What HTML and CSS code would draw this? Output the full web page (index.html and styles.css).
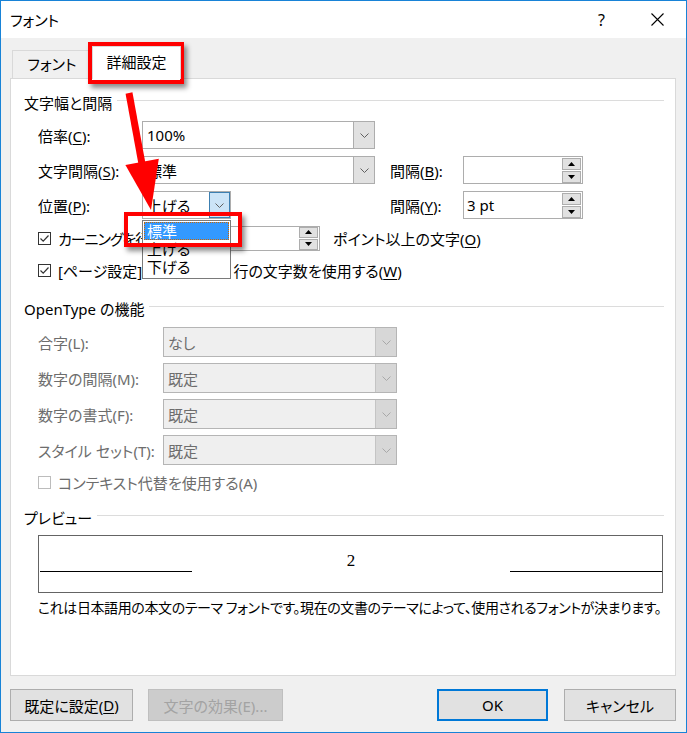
FILE: index.html
```html
<!DOCTYPE html>
<html lang="ja">
<head>
<meta charset="utf-8">
<title>フォント</title>
<link rel="stylesheet" href="styles.css">
</head>
<body>
<div class="window">
  <div class="titlebar">
    <span class="title">フォント</span>
    <span class="help">?</span>
    <svg class="close" width="13" height="13" viewBox="0 0 13 13"><path d="M0.5 0.5L12.5 12.5M12.5 0.5L0.5 12.5" stroke="#000" stroke-width="1.1" fill="none"/></svg>
  </div>
  <div class="client">
    <div class="tabs">
      <div class="tab">フォント</div>
      <div class="tab active">詳細設定</div>
    </div>
    <div class="panel">
      <div class="group-head"><span>文字幅と間隔</span></div>
      <div class="grid1">
        <span class="lbl">倍率(<u>C</u>):</span>
        <div class="combo w233"><span class="val">100%</span><span class="drop"><svg width="9" height="5" viewBox="0 0 9 5"><path d="M0.5 0.5L4.5 4.5L8.5 0.5" stroke="#606060" fill="none"/></svg></span></div>
        <span></span><span></span>

        <span class="lbl">文字間隔(<u>S</u>):</span>
        <div class="combo w233"><span class="val">標準</span><span class="drop"><svg width="9" height="5" viewBox="0 0 9 5"><path d="M0.5 0.5L4.5 4.5L8.5 0.5" stroke="#606060" fill="none"/></svg></span></div>
        <span class="lbl">間隔(<u>B</u>):</span>
        <div class="spin"><span class="val"></span><span class="spin-btns"><span class="sb"><svg width="7" height="4" viewBox="0 0 7 4"><path d="M0 4L3.5 0L7 4Z" fill="#000"/></svg></span><span class="sb"><svg width="7" height="4" viewBox="0 0 7 4"><path d="M0 0L3.5 4L7 0Z" fill="#000"/></svg></span></span></div>

        <span class="lbl">位置(<u>P</u>):</span>
        <div class="combo w89 active"><span class="val">上げる</span><span class="drop"><svg width="9" height="5" viewBox="0 0 9 5"><path d="M0.5 0.5L4.5 4.5L8.5 0.5" stroke="#606060" fill="none"/></svg></span></div>
        <span class="lbl">間隔(<u>Y</u>):</span>
        <div class="spin"><span class="val">3 pt</span><span class="spin-btns"><span class="sb"><svg width="7" height="4" viewBox="0 0 7 4"><path d="M0 4L3.5 0L7 4Z" fill="#000"/></svg></span><span class="sb"><svg width="7" height="4" viewBox="0 0 7 4"><path d="M0 0L3.5 4L7 0Z" fill="#000"/></svg></span></span></div>
      </div>

      <div class="check-row row4">
        <span class="cb"><svg width="11" height="11" viewBox="0 0 11 11"><path d="M1.5 5.5L4.2 8.2L9.5 2.5" stroke="#333" stroke-width="1.2" fill="none"/></svg></span>
        <span class="kern-lbl">カーニングを行う(<u>K</u>):</span>
        <div class="spin small"><span class="val"></span><span class="spin-btns"><span class="sb"><svg width="7" height="4" viewBox="0 0 7 4"><path d="M0 4L3.5 0L7 4Z" fill="#000"/></svg></span><span class="sb"><svg width="7" height="4" viewBox="0 0 7 4"><path d="M0 0L3.5 4L7 0Z" fill="#000"/></svg></span></span></div>
        <span class="after-spin">ポイント以上の文字(<u>O</u>)</span>
      </div>
      <div class="check-row row5">
        <span class="cb"><svg width="11" height="11" viewBox="0 0 11 11"><path d="M1.5 5.5L4.2 8.2L9.5 2.5" stroke="#333" stroke-width="1.2" fill="none"/></svg></span>
        <span>[ページ設定] で指定した 1 行の文字数を使用する(<u>W</u>)</span>
      </div>

      <div class="group-head gh2"><span>OpenType の機能</span></div>
      <div class="grid2">
        <span class="lbl">合字(L):</span>
        <div class="combo disabled"><span class="val">なし</span><span class="drop"><svg width="9" height="5" viewBox="0 0 9 5"><path d="M0.5 0.5L4.5 4.5L8.5 0.5" stroke="#a8a8a8" fill="none"/></svg></span></div>
        <span class="lbl">数字の間隔(M):</span>
        <div class="combo disabled"><span class="val">既定</span><span class="drop"><svg width="9" height="5" viewBox="0 0 9 5"><path d="M0.5 0.5L4.5 4.5L8.5 0.5" stroke="#a8a8a8" fill="none"/></svg></span></div>
        <span class="lbl">数字の書式(F):</span>
        <div class="combo disabled"><span class="val">既定</span><span class="drop"><svg width="9" height="5" viewBox="0 0 9 5"><path d="M0.5 0.5L4.5 4.5L8.5 0.5" stroke="#a8a8a8" fill="none"/></svg></span></div>
        <span class="lbl">スタイル セット(T):</span>
        <div class="combo disabled"><span class="val">既定</span><span class="drop"><svg width="9" height="5" viewBox="0 0 9 5"><path d="M0.5 0.5L4.5 4.5L8.5 0.5" stroke="#a8a8a8" fill="none"/></svg></span></div>
      </div>
      <div class="check-row row-ctx disabled-text">
        <span class="cb off"></span>
        <span>コンテキスト代替を使用する(A)</span>
      </div>

      <div class="group-head gh3"><span>プレビュー</span></div>
      <div class="preview">
        <span class="pline"></span>
        <span class="pmid">2</span>
        <span class="pline"></span>
      </div>
      <div class="caption">これは日本語用の本文のテーマ フォントです。現在の文書のテーマによって、使用されるフォントが決まります。</div>
    </div>
    <div class="buttons">
      <div class="btn b1">既定に設定(<u>D</u>)</div>
      <div class="btn b2 disabled">文字の効果(E)...</div>
      <div class="btn ok">OK</div>
      <div class="btn cancel">キャンセル</div>
    </div>
  </div>
</div>

<div class="droplist">
  <div class="item sel">標準</div>
  <div class="item">上げる</div>
  <div class="item">下げる</div>
</div>
<div class="redbox tab-mark"></div>
<div class="redbox item-mark"></div>
<svg class="arrow" width="687" height="733" viewBox="0 0 687 733">
  <line x1="129" y1="93" x2="142" y2="164" stroke="#ff0000" stroke-width="7"/>
  <polygon points="151,210 158.8,158.7 125.4,165.1" fill="#ff0000"/>
</svg>
</body>
</html>
```

FILE: styles.css
```css
* { box-sizing: border-box; }
html, body { margin: 0; padding: 0; }
body {
  position: relative;
  width: 687px;
  height: 733px;
  overflow: hidden;
  font-family: "Noto Sans", "Noto Sans CJK JP", sans-serif;
  font-size: 15px;
  color: #000;
  font-feature-settings: "palt";
  background: #fff;
}
u { text-decoration: underline; text-underline-offset: 2px; }

.window {
  width: 687px;
  height: 733px;
  border: 1px solid #1883d7;
  background: #f0f0f0;
  display: flex;
  flex-direction: column;
}
.titlebar {
  height: 37px;
  flex-shrink: 0;
  background: #fff;
  display: flex;
  align-items: center;
}
.title { flex: 1; padding-left: 9px; }
.help { margin-right: 46px; font-size: 16px; font-family: "Noto Sans", sans-serif; }
.close { margin-right: 22px; }

.client { flex: 1; padding-left: 9px; }
.tabs {
  height: 40px;
  display: flex;
  align-items: flex-end;
  padding-left: 2px;
}
.tab {
  width: 80px;
  height: 28px;
  display: flex;
  align-items: center;
  justify-content: center;
  border: 1px solid #d9d9d9;
  border-bottom: none;
  background: #f0f0f0;
  padding-bottom: 2px;
}
.tab.active {
  width: 89px;
  height: 33px;
  margin-bottom: -1px;
  background: #fff;
  position: relative;
  z-index: 1;
  padding-bottom: 4px;
}
.panel {
  width: 666px;
  height: 598px;
  background: #fff;
  border: 1px solid #d9d9d9;
  padding-top: 13px;
}
.group-head {
  display: flex;
  align-items: center;
  height: 20px;
  margin: 0 11px 0 13px;
}
.group-head::after {
  content: "";
  flex: 1;
  border-top: 1px solid #dcdcdc;
  margin-left: 5px;
  margin-bottom: 4px;
}
.gh2 { margin-top: 14px; }
.gh3 { margin-top: 13px; }

.grid1 {
  display: grid;
  grid-template-columns: 104px 248px 73px 120px;
  grid-template-rows: 28px 28px 28px;
  row-gap: 7px;
  align-items: center;
  margin: 9px 0 0 27px;
}
.combo {
  height: 28px;
  border: 1px solid #adadad;
  background: #fff;
  display: flex;
  align-items: center;
}
.combo .val { flex: 1; padding-left: 4px; white-space: nowrap; overflow: hidden; }
.combo .drop {
  width: 21px;
  height: 100%;
  background: #e1e1e1;
  border-left: 1px solid #adadad;
  display: flex;
  align-items: center;
  justify-content: center;
}
.w233 { width: 233px; }
.w89 { width: 89px; }
.combo.active .drop {
  background: #cce4f7;
  border: 1px solid #3c7fb1;
}
.spin {
  width: 120px;
  height: 28px;
  border: 1px solid #adadad;
  background: #fff;
  display: flex;
  align-items: center;
}
.spin .val { flex: 1; padding-left: 3px; }
.spin-btns {
  width: 19px;
  margin-right: 1px;
  display: flex;
  flex-direction: column;
  gap: 1px;
}
.sb {
  height: 12px;
  background: #e1e1e1;
  border: 1px solid #adadad;
  display: flex;
  align-items: center;
  justify-content: center;
}

.check-row {
  display: flex;
  align-items: center;
  height: 28px;
  margin-left: 27px;
  white-space: nowrap;
}
.row4 { margin-top: 5px; }
.row5 { margin-top: 4px; }
.cb {
  width: 13px;
  height: 13px;
  border: 1px solid #333;
  background: #fff;
  margin-right: 7px;
  display: flex;
  align-items: center;
  justify-content: center;
  flex-shrink: 0;
}
.cb.off { border-color: #bcbcbc; }
.kern-lbl { width: 154px; overflow: hidden; letter-spacing: -1px; }
.spin.small { width: 108px; height: 25px; }
.spin.small .sb { height: 11px; }
.after-spin { margin-left: 13px; }

.grid2 {
  display: grid;
  grid-template-columns: 125px 234px;
  grid-auto-rows: 30px;
  row-gap: 6px;
  align-items: center;
  margin: 9px 0 0 27px;
  color: #6d6d6d;
}
.combo.disabled {
  width: 234px;
  height: 30px;
  background: #efefef;
  border-color: #b5b5b5;
  color: #6d6d6d;
}
.combo.disabled .drop {
  background: #d7d7d7;
  border-left: 1px solid #c4c4c4;
}
.row-ctx { margin-top: 5px; height: 24px; }
.disabled-text { color: #6d6d6d; }

.preview {
  width: 625px;
  height: 58px;
  margin: 8px 0 0 27px;
  border: 1px solid #646464;
  display: flex;
  padding-left: 1px;
}
.pline {
  width: 152px;
  height: 36px;
  border-bottom: 1px solid #000;
}
.pmid {
  flex: 1;
  text-align: center;
  font-family: "Liberation Serif", serif;
  font-size: 17px;
  line-height: 20px;
  padding-top: 15px;
}
.caption {
  margin: 5px 0 0 27px;
  height: 20px;
  line-height: 20px;
  font-size: 14px;
  letter-spacing: -0.4px;
  white-space: nowrap;
}

.buttons {
  display: flex;
  height: 32px;
  margin-top: 13px;
  padding-right: 10px;
}
.btn {
  height: 32px;
  background: #e1e1e1;
  border: 1px solid #adadad;
  display: flex;
  align-items: center;
  justify-content: center;
  white-space: nowrap;
}
.b1 { width: 123px; }
.b2 { width: 135px; margin-left: 15px; }
.btn.disabled { background: #cccccc; border-color: #bfbfbf; color: #a3a3a3; }
.ok { width: 111px; margin-left: auto; border: 2px solid #0078d7; }
.cancel { width: 112px; margin-left: 16px; }

/* overlays */
.droplist {
  position: absolute;
  left: 142px;
  top: 220px;
  width: 89px;
  height: 59px;
  background: #fff;
  border: 1px solid #7a7a7a;
  padding-top: 1px;
}
.droplist .item {
  height: 18px;
  line-height: 18px;
  padding-left: 3px;
  margin: 0 1px;
}
.droplist .item.sel {
  background: #3399ff;
  color: #fff;
  outline: 1px dotted #cc6600;
  outline-offset: -1px;
}
.redbox {
  position: absolute;
  border: 4px solid #ff0000;
  box-shadow: 3px 4px 5px rgba(0, 0, 0, 0.45);
}
.tab-mark { left: 88px; top: 42px; width: 96px; height: 42px; }
.item-mark { left: 124px; top: 212px; width: 118px; height: 35px; }
.arrow {
  position: absolute;
  left: 0;
  top: 0;
  pointer-events: none;
}
```
